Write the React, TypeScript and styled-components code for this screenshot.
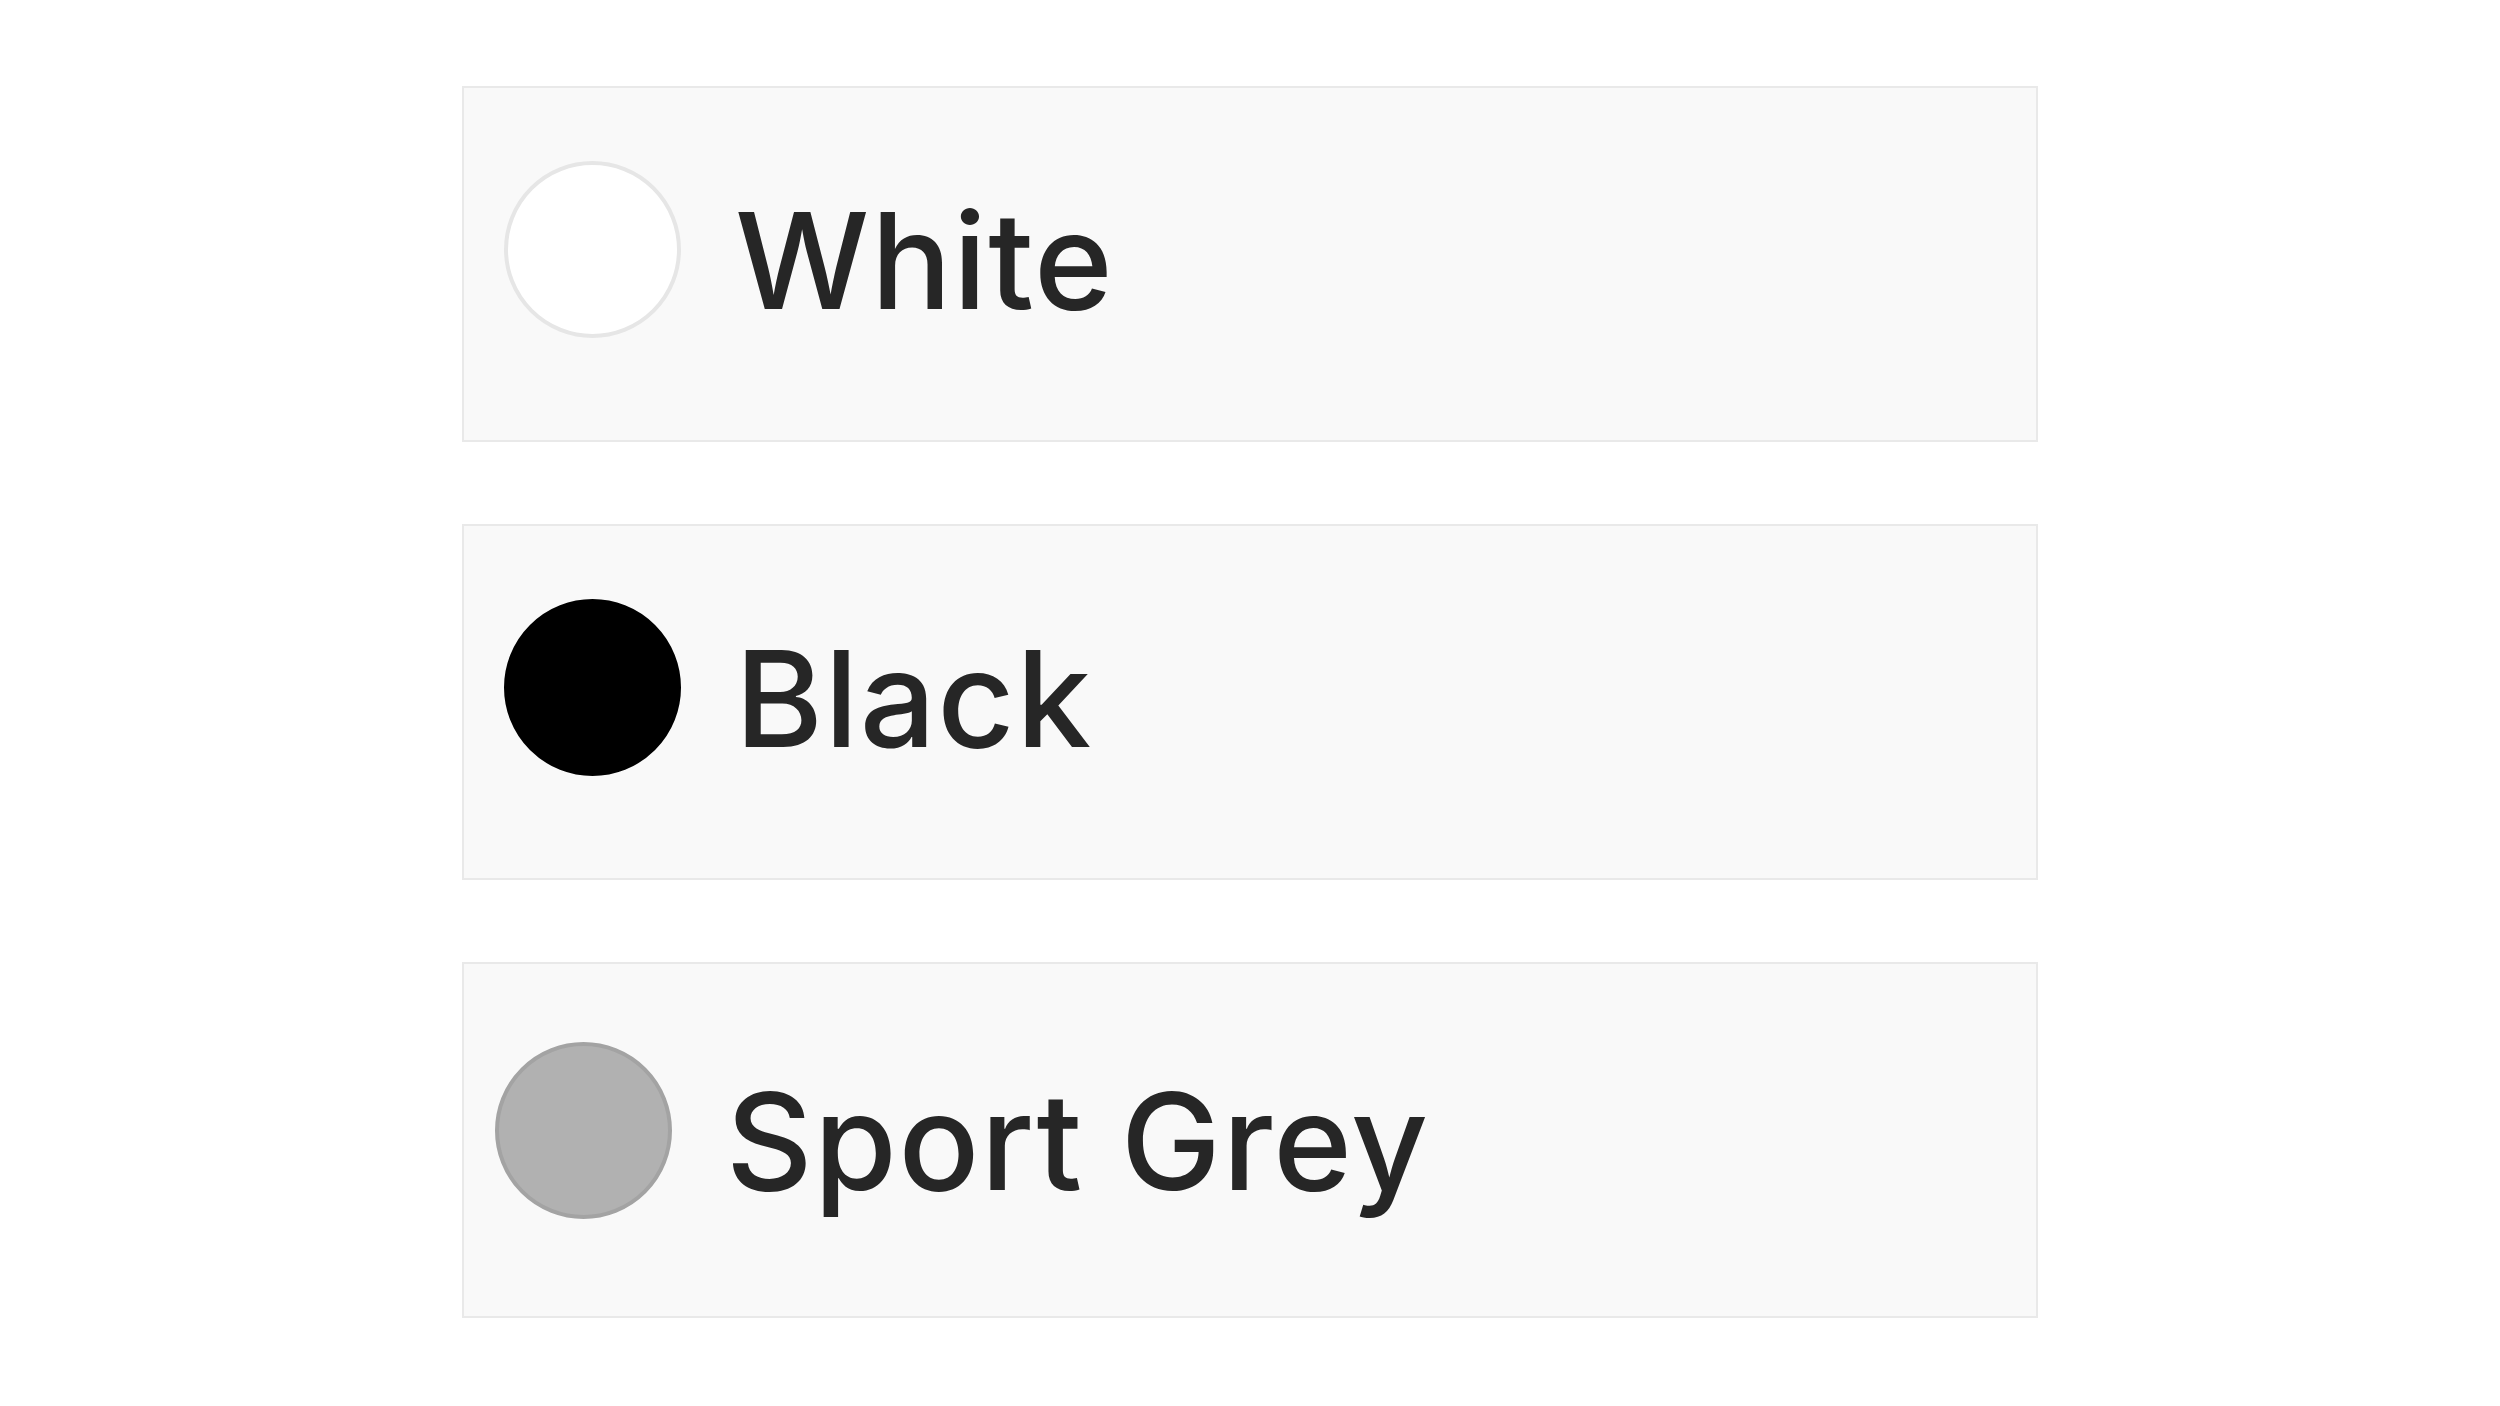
import styled, { createGlobalStyle } from "styled-components";

const COLORS = [
  { name: "White", fill: "#ffffff", ring: "#e6e6e6", inset: 40, lift: 30 },
  { name: "Black", fill: "#000000", ring: "#000000", inset: 40, lift: 30 },
  { name: "Sport Grey", fill: "#b1b1b1", ring: "#a3a3a3", inset: 31, lift: 20 },
];

const GlobalStyle = createGlobalStyle`
  body {
    margin: 0;
    background: #ffffff;
    font-family: Inter, "Liberation Sans", sans-serif;
  }
`;

const App = () => {
  return (
    <>
      <GlobalStyle />
      <List>
        {COLORS.map((color) => (
          <Option key={color.name} inset={color.inset} lift={color.lift}>
            <Swatch fill={color.fill} ring={color.ring} />
            <Label>{color.name}</Label>
          </Option>
        ))}
      </List>
    </>
  );
};

export default App;

const List = styled.div`
  display: flex;
  flex-direction: column;
  align-items: center;
  gap: 82px;
  padding-top: 86px;
`;

const Option = styled.div<{ inset: number; lift: number }>`
  box-sizing: border-box;
  width: 1576px;
  height: 356px;
  padding: 0 0 ${({ lift }) => lift}px ${({ inset }) => inset}px;
  display: flex;
  align-items: center;
  gap: 54px;
  background-color: #f9f9f9;
  border: 2px solid #e9e9e9;
  cursor: pointer;
`;

const Swatch = styled.span<{ fill: string; ring: string }>`
  box-sizing: border-box;
  flex: none;
  width: 177px;
  height: 177px;
  border-radius: 50%;
  background-color: ${({ fill }) => fill};
  border: 4px solid ${({ ring }) => ring};
`;

const Label = styled.span`
  padding-top: 22px;
  font-size: 134px;
  font-weight: 500;
  letter-spacing: 1.5px;
  color: #262626;
  line-height: 1;
`;
